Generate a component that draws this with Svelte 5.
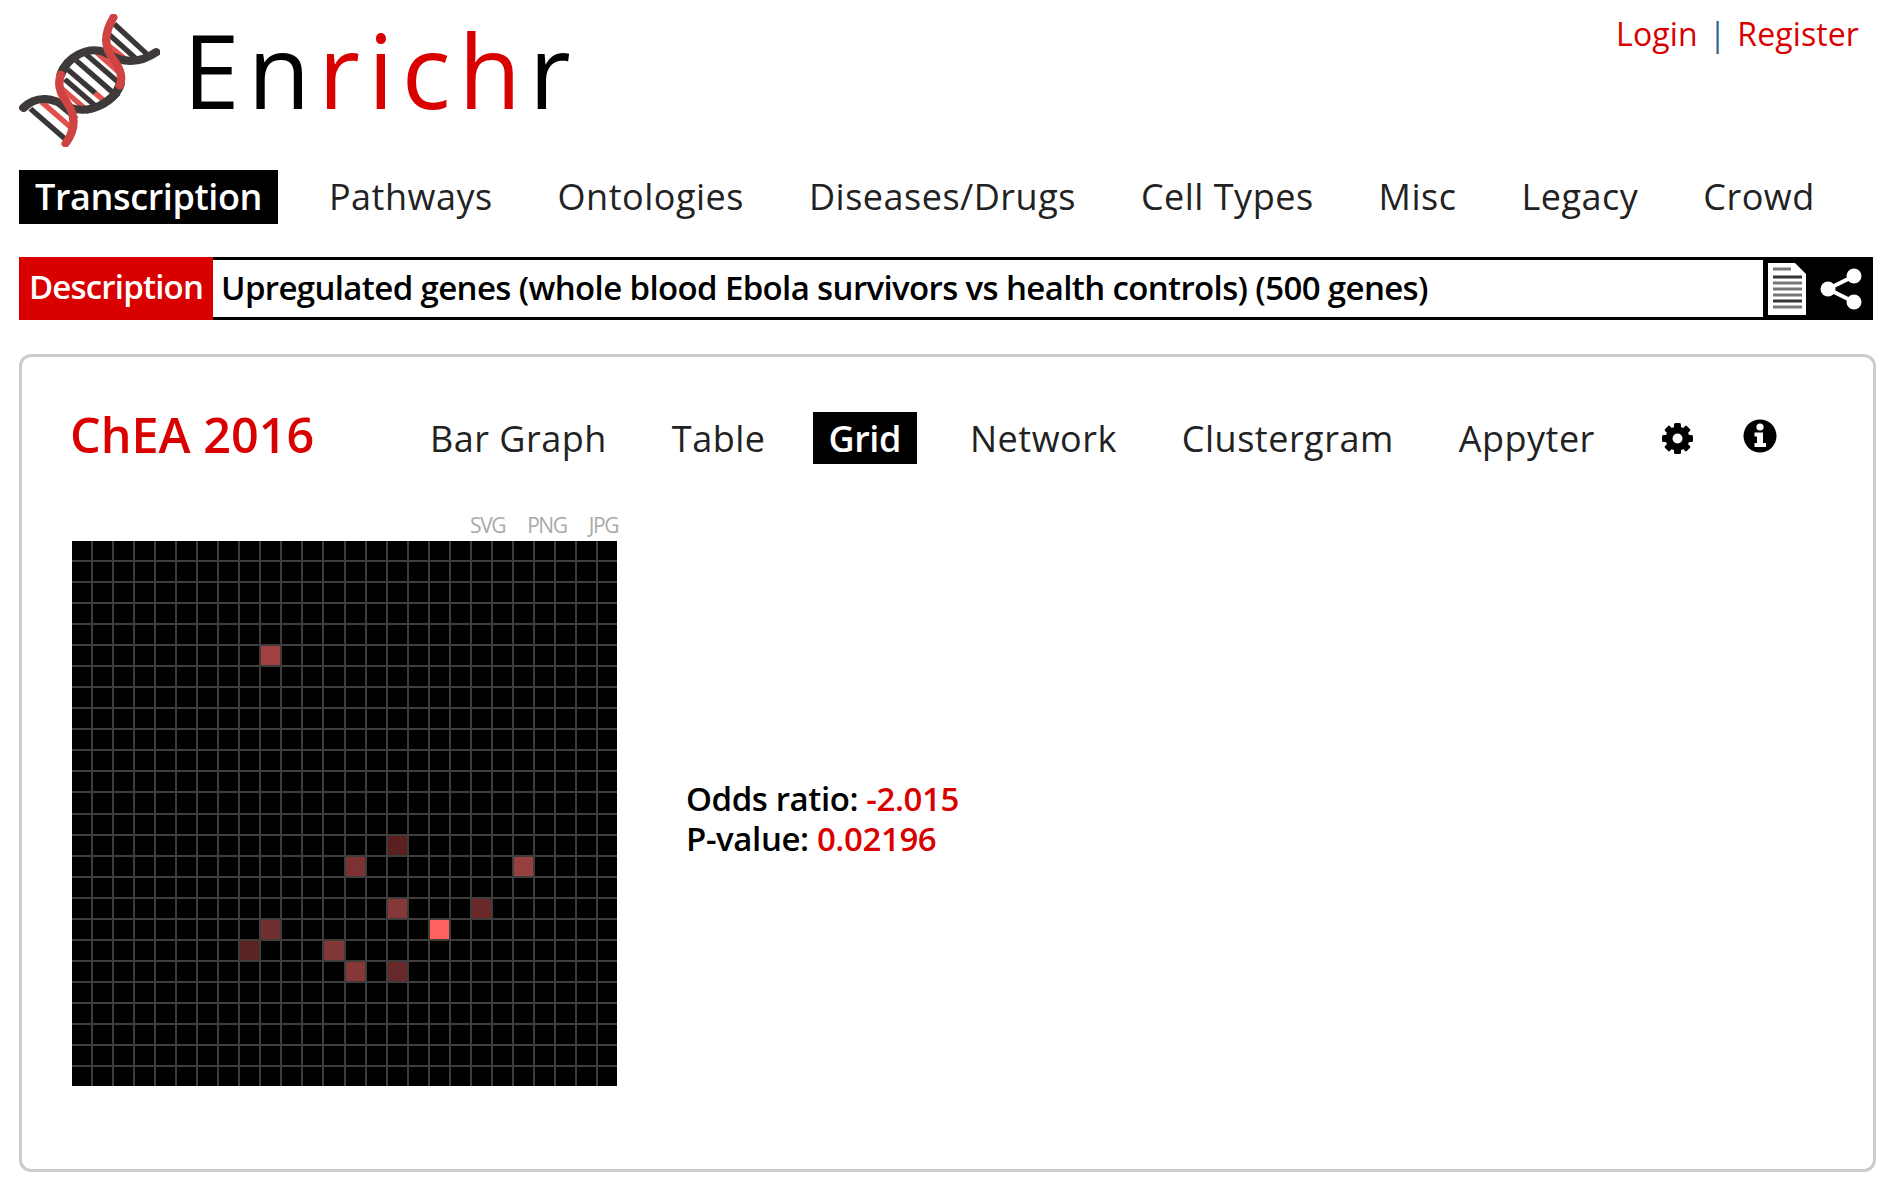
<script>
	const mainNav = ['Transcription', 'Pathways', 'Ontologies', 'Diseases/Drugs', 'Cell Types', 'Misc', 'Legacy', 'Crowd'];
	const tabs = ['Bar Graph', 'Table', 'Grid', 'Network', 'Clustergram', 'Appyter'];

	// lit squares of the 26x26 library grid: [col, row, colour]
	const lit = [
		[9, 5, '#a04040'],
		[15, 14, '#5a2020'],
		[13, 15, '#7c3232'],
		[21, 15, '#964040'],
		[15, 17, '#843838'],
		[19, 17, '#6a2828'],
		[9, 18, '#703030'],
		[17, 18, '#ff6060'],
		[8, 19, '#5a2424'],
		[12, 19, '#823838'],
		[13, 20, '#863838'],
		[15, 20, '#662828']
	];

	const cells = Array.from({ length: 26 * 26 }, (_, i) => {
		const hit = lit.find((c) => c[0] === i % 26 && c[1] === Math.floor(i / 26));
		return hit ? hit[2] : '#000';
	});

	const teeth = [0, 45, 90, 135, 180, 225, 270, 315];
</script>

<div class="page">
	<header class="top">
		<div class="brand">
			<svg class="logo" viewBox="40 40 370 400" preserveAspectRatio="none" aria-hidden="true">
				<g stroke-width="15" fill="none">
					<path d="M190 180L300 290" stroke="#3a3536" />
					<path d="M168 207L240 278" stroke="#3a3536" />
					<path d="M240 278L275 312" stroke="#e0504c" />
					<path d="M160 236L250 326" stroke="#3a3536" />
					<path d="M215 160L305 250" stroke="#3a3536" />
					<path d="M150 262L225 336" stroke="#e0504c" />
					<path d="M240 152L305 218" stroke="#e0504c" />
					<path d="M290 70L375 160" stroke="#3a3536" />
					<path d="M275 100L345 172" stroke="#3a3536" />
					<path d="M268 128L320 176" stroke="#e0504c" />
					<path d="M70 325L165 420" stroke="#3a3536" />
					<path d="M100 305L180 385" stroke="#e0504c" />
					<path d="M130 298L190 355" stroke="#3a3536" />
				</g>
				<path d="M400 155C350 195 305 185 265 155C220 135 165 170 150 222" stroke="#3f3a3a" stroke-width="24" fill="none" stroke-linecap="round" />
				<path d="M52 322C90 280 130 295 170 320C225 345 290 305 306 250" stroke="#3f3a3a" stroke-width="24" fill="none" stroke-linecap="round" />
				<path d="M288 50C262 100 262 140 290 180C312 215 310 240 304 256" stroke="#cf4442" stroke-width="22" fill="none" stroke-linecap="round" />
				<path d="M162 430C190 385 190 345 165 305C142 270 142 245 150 222" stroke="#cf4442" stroke-width="22" fill="none" stroke-linecap="round" />
			</svg>
			<h1 class="wordmark">En<span class="red">rich</span>r</h1>
		</div>
		<div class="auth"><span>Login</span><i>|</i><span>Register</span></div>
	</header>

	<nav class="main-nav">
		{#each mainNav as item, i}
			<span class:on={i === 0}>{item}</span>
		{/each}
	</nav>

	<div class="desc">
		<div class="desc-label">Description</div>
		<div class="desc-text">Upregulated genes (whole blood Ebola survivors vs health controls) (500 genes)</div>
		<div class="desc-icons">
			<svg width="38" height="52" viewBox="0 0 38 52" aria-hidden="true">
				<path d="M0 0H27L38 11V52H0Z" fill="#fff" />
				<g stroke-width="3">
					<path d="M5 6H23M5 26H34M5 32H34M5 44H34" stroke="#777" />
					<path d="M5 14H34M5 38H34" stroke="#333" />
					<path d="M5 20H34" stroke="#777" />
				</g>
			</svg>
			<svg width="44" height="44" viewBox="0 0 44 44" aria-hidden="true">
				<path d="M35 9L9 22L35 35" stroke="#fff" stroke-width="4" fill="none" />
				<circle cx="35" cy="9" r="7.5" fill="#fff" />
				<circle cx="9" cy="22" r="7.5" fill="#fff" />
				<circle cx="35" cy="35" r="7.5" fill="#fff" />
			</svg>
		</div>
	</div>

	<section class="card">
		<div class="card-head">
			<h2>ChEA 2016</h2>
			<div class="tabs">
				{#each tabs as tab}
					<span class:on={tab === 'Grid'}>{tab}</span>
				{/each}
				<svg class="gear" width="33" height="33" viewBox="0 0 33 33" aria-hidden="true">
					{#each teeth as a}
						<rect x="13" y="1" width="7" height="8" rx="1.5" transform="rotate({a} 16.5 16.5)" />
					{/each}
					<circle cx="16.5" cy="16.5" r="8.5" fill="none" stroke="#000" stroke-width="7" />
				</svg>
				<svg class="info" width="34" height="34" viewBox="0 0 34 34" aria-hidden="true">
					<circle cx="17" cy="17" r="16.5" fill="#000" />
					<circle cx="17" cy="8" r="3.6" fill="#fff" />
					<path d="M11.5 13.5H20V24H23V28H11.5V24H14V17.5H11.5Z" fill="#fff" />
				</svg>
			</div>
		</div>

		<div class="card-body">
			<div class="figure">
				<div class="export"><span>SVG</span><span>PNG</span><span>JPG</span></div>
				<div class="grid">
					{#each cells as colour}
						<div style="background: {colour}"></div>
					{/each}
				</div>
			</div>
			<div class="stats">
				<div class="stat-line">Odds ratio: <span class="red">-2.015</span></div>
				<div class="stat-line">P-value: <span class="red">0.02196</span></div>
			</div>
		</div>
	</section>
</div>

<style>
	:global(body) {
		margin: 0;
		background: #fff;
	}

	.page {
		padding: 14px 12px 0 19px;
		font-family: 'Open Sans', 'Noto Sans', sans-serif;
		color: #000;
		box-sizing: border-box;
		width: 1887px;
		height: 1178px;
		overflow: hidden;
	}

	.red {
		color: #d90000;
	}

	.top {
		display: flex;
		justify-content: space-between;
		align-items: flex-start;
		height: 156px;
	}

	.brand {
		display: flex;
		gap: 23px;
	}

	.logo {
		width: 141px;
		height: 133px;
		display: block;
	}

	.wordmark {
		margin: -3px 0 0;
		font-size: 102px;
		font-weight: 400;
		line-height: 118px;
		letter-spacing: 8px;
	}

	.auth {
		display: flex;
		gap: 11px;
		margin: -2px 16px 0 0;
		font-size: 32px;
		line-height: 44px;
		letter-spacing: 0.1px;
		color: #d90000;
	}

	.auth i {
		font-style: normal;
		color: #36648b;
	}

	.main-nav {
		display: flex;
		gap: 33px;
		font-size: 36px;
		line-height: 54px;
		letter-spacing: 0.5px;
		color: #222;
	}

	.main-nav span,
	.tabs span {
		padding: 0 16px;
		white-space: nowrap;
	}

	.main-nav .on,
	.tabs .on {
		background: #000;
		color: #fff;
		font-weight: 600;
		letter-spacing: -0.4px;
	}

	.main-nav .on {
		margin-right: 2px;
	}

	.tabs .on {
		margin: 0 4px 0 -2px;
	}

	.desc {
		display: flex;
		margin-top: 33px;
		width: 1854px;
		height: 63px;
		font-size: 33px;
		font-weight: 600;
		letter-spacing: -0.63px;
	}

	.desc-label {
		width: 194px;
		background: #d90000;
		color: #fff;
		text-align: center;
		line-height: 60px;
		letter-spacing: -0.8px;
	}

	.desc-text {
		flex: 1;
		padding-left: 8px;
		border: solid #000;
		border-width: 3px 0;
		line-height: 56px;
		white-space: nowrap;
	}

	.desc-icons {
		width: 110px;
		background: #000;
		display: flex;
		align-items: center;
		justify-content: space-between;
		padding: 0 10px 0 5px;
		box-sizing: border-box;
	}

	.card {
		margin-top: 34px;
		width: 1857px;
		height: 818px;
		box-sizing: border-box;
		border: 3px solid #ccc;
		border-radius: 12px;
		padding: 51px 49px 0 50px;
	}

	.card-head {
		display: flex;
		align-items: center;
		height: 60px;
	}

	.card-head h2 {
		margin: -9px 0 0 -2px;
		width: 344px;
		font-size: 48.5px;
		font-weight: 600;
		color: #d90000;
		white-space: nowrap;
	}

	.tabs {
		display: flex;
		align-items: center;
		gap: 33px;
		font-size: 36px;
		line-height: 51px;
		letter-spacing: 0.5px;
		color: #222;
	}

	.tabs span {
		padding-top: 1px;
	}

	.gear {
		margin-left: 17px;
	}

	.info {
		margin-left: 16px;
		margin-top: -4px;
	}

	.card-body {
		display: flex;
		align-items: center;
		gap: 69px;
		margin-top: 45px;
	}

	.export {
		display: flex;
		justify-content: flex-end;
		gap: 22px;
		height: 28px;
		margin-right: -1px;
		font-size: 21px;
		line-height: 24px;
		letter-spacing: -1.4px;
		color: #aaa;
	}

	.grid {
		display: grid;
		grid-template-columns: repeat(26, 1fr);
		grid-template-rows: repeat(26, 1fr);
		gap: 2px;
		width: 545px;
		height: 545px;
		background: #3d3d3d;
	}

	.stats {
		font-size: 33px;
		font-weight: 600;
		letter-spacing: -0.4px;
		margin-top: 38px;
	}

	.stat-line {
		height: 40px;
		line-height: 40px;
	}
</style>
